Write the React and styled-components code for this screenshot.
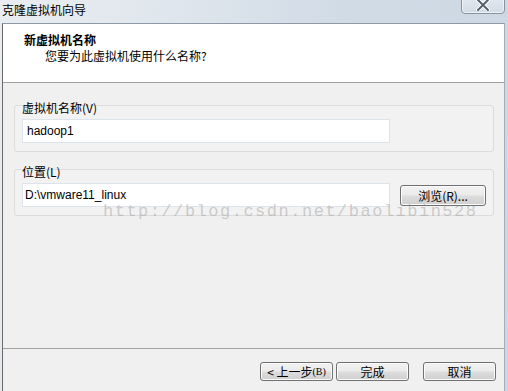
import React from 'react';
import styled, { createGlobalStyle } from 'styled-components';

const GlobalStyle = createGlobalStyle`
  html, body {
    margin: 0;
    padding: 0;
    background: #d3dce6;
  }
  * {
    box-sizing: border-box;
  }
`;

const cjk = `"Noto Sans CJK SC", "Noto Sans", sans-serif`;
const latin = `"Liberation Sans", "Noto Sans CJK SC", sans-serif`;

const Frame = styled.div`
  width: 508px;
  height: 391px;
  overflow: hidden;
  display: flex;
  flex-direction: column;
  background: linear-gradient(100deg, #e9edf1 0%, #dfe6ed 30%, #d1dbe6 60%, #cdd7e3 100%);
  font-family: ${cjk};
  font-size: 12px;
  color: #000;
`;

const TitleBar = styled.div`
  height: 23px;
  flex-shrink: 0;
  display: flex;
  align-items: flex-start;
  justify-content: space-between;
  padding-left: 2px;
`;

const Title = styled.div`
  font-size: 12px;
  line-height: 20px;
  color: #000;
`;

const CloseButton = styled.div`
  width: 44px;
  height: 19px;
  margin-top: -5px;
  margin-right: 3px;
  border: 1px solid #8793a1;
  border-radius: 0 0 4px 4px;
  background: linear-gradient(#e4eaf0, #d2dbe5);
  box-shadow: inset 0 0 0 1px rgba(255, 255, 255, 0.6);
  display: flex;
  align-items: center;
  justify-content: center;
`;

const Window = styled.div`
  flex: 1;
  display: flex;
  flex-direction: column;
  margin-left: 2px;
  width: 503px;
  border-top: 1px solid #8d99a6;
  border-left: 1px solid #6a6a6a;
  border-right: 1px solid #a5aeb8;
  background: #f0f0f0;
`;

const Header = styled.div`
  height: 59px;
  flex-shrink: 0;
  background: #fff;
  border-bottom: 1px solid #a0a0a0;
  padding: 8px 0 0 21px;
`;

const HeaderTitle = styled.div`
  font-weight: bold;
  font-size: 12px;
  line-height: 16px;
`;

const HeaderSub = styled.div`
  font-size: 12px;
  line-height: 16px;
  padding-left: 21px;
`;

const Content = styled.div`
  position: relative;
  height: 265px;
  flex-shrink: 0;
  padding: 22px 0 0 11px;
  display: flex;
  flex-direction: column;
  gap: 17px;
`;

const Group = styled.div`
  width: 480px;
  border: 1px solid #dcdcdc;
  border-radius: 3px;
  background: #f2f2f2;
  padding: 0 6px 8px 7px;
`;

const GroupLabel = styled.div`
  font-size: 12px;
  line-height: 14px;
  margin-top: -5px;
  margin-bottom: 4px;
`;

const Row = styled.div`
  display: flex;
  align-items: center;
  gap: 10px;
`;

const Field = styled.div`
  width: 368px;
  height: 24px;
  border: 1px solid #dde3ea;
  background: #fff;
  font-family: ${latin};
  font-size: 12px;
  line-height: 22px;
  padding-left: ${props => props.indent}px;
`;

const Button = styled.div`
  width: ${props => props.width}px;
  height: ${props => props.height}px;
  border: 1px solid #707070;
  border-radius: 3px;
  background: linear-gradient(#f2f2f2 0%, #ebebeb 48%, #dddddd 52%, #cfcfcf 100%);
  box-shadow: inset 0 0 0 1px #fbfbfb;
  display: flex;
  align-items: center;
  justify-content: center;
  font-size: 12px;
  white-space: nowrap;
  margin-left: ${props => props.gap || 0}px;
`;

const Small = styled.span`
  font-family: "Liberation Serif", serif;
  font-size: 10px;
`;

/* csdn watermark baked into the screenshot */
const Watermark = styled.div`
  position: absolute;
  left: 100px;
  top: 119px;
  font-family: "Liberation Mono", "DejaVu Sans Mono", monospace;
  font-size: 17px;
  letter-spacing: 1.5px;
  color: rgba(140, 140, 140, 0.4);
  white-space: nowrap;
  pointer-events: none;
`;

const Footer = styled.div`
  flex: 1;
  border-top: 1px solid #a0a0a0;
  display: flex;
  justify-content: flex-end;
  align-items: flex-start;
  padding: 13px 8px 0 0;
`;

const App = () => (
  <>
    <GlobalStyle />
    <Frame>
      <TitleBar>
        <Title>克隆虚拟机向导</Title>
        <CloseButton>
          <svg width="14" height="12" viewBox="0 0 14 12">
            <path d="M2 1 L12 11 M12 1 L2 11" stroke="#fff" strokeWidth="4" strokeLinecap="round" />
            <path d="M2 1 L12 11 M12 1 L2 11" stroke="#55606c" strokeWidth="2" strokeLinecap="round" />
          </svg>
        </CloseButton>
      </TitleBar>
      <Window>
        <Header>
          <HeaderTitle>新虚拟机名称</HeaderTitle>
          <HeaderSub>您要为此虚拟机使用什么名称?</HeaderSub>
        </Header>
        <Content>
          <Group>
            <GroupLabel>虚拟机名称(V)</GroupLabel>
            <Row>
              <Field indent={4}>hadoop1</Field>
            </Row>
          </Group>
          <Group>
            <GroupLabel>位置(L)</GroupLabel>
            <Row>
              <Field indent={2}>D:\vmware11_linux</Field>
              <Button width={86} height={21}>浏览(R)...</Button>
            </Row>
          </Group>
          <Watermark>http://blog.csdn.net/baolibin528</Watermark>
        </Content>
        <Footer>
          <Button width={73} height={19}>
            &lt; 上一步<Small>(B)</Small>
          </Button>
          <Button width={73} height={19} gap={3}>完成</Button>
          <Button width={73} height={19} gap={14}>取消</Button>
        </Footer>
      </Window>
    </Frame>
  </>
);

export default App;
